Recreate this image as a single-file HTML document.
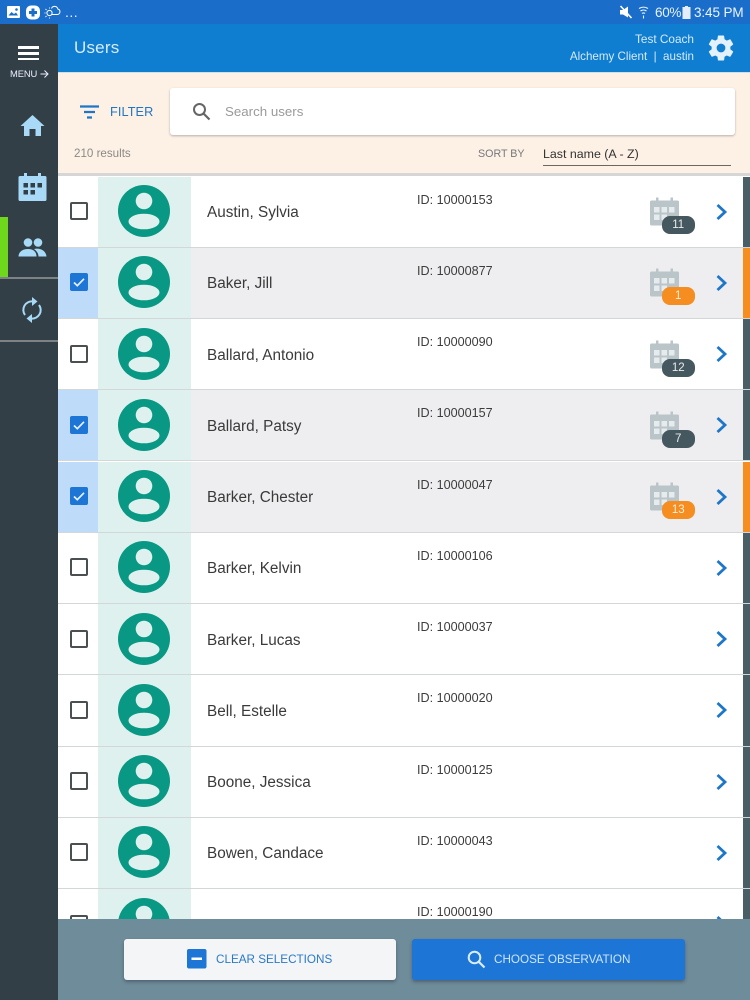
<!DOCTYPE html>
<html><head><meta charset="utf-8"><style>
*{box-sizing:border-box}
html,body{margin:0;padding:0;width:750px;height:1000px;overflow:hidden;background:#fff;font-family:"Liberation Sans",sans-serif}
.a{position:absolute}
#p{position:relative;width:750px;height:1000px;overflow:hidden}
.row{position:absolute;left:58px;width:692px;height:71.3px;background:#fff;border-bottom:1.5px solid #d4d7d8}
.row.s{background:#eeedef}
.row .chk{position:absolute;left:0;top:0;width:40px;height:100%}
.row.s .chk{background:#bedcfa}
.row .band{position:absolute;left:40px;top:0;width:93px;height:100%;background:#dff1ef}
.row .box{position:absolute;left:12px;top:25.500px;width:18px;height:18px;border:2px solid #4a4f52;border-radius:2px;background:#fff}
.row.s .box{border:0;background:#1d76d6}
.row .av{position:absolute;left:60px;top:8.500px}
.row .n{position:absolute;left:149px;top:27.500px;font-size:15.3px;line-height:18px;color:#3a3a3a;white-space:nowrap}
.row .id{position:absolute;left:359px;top:16px;font-size:12.600px;line-height:15px;color:#3c3c3c;white-space:nowrap}
.row .cal{position:absolute;left:591.500px;top:20.500px}
.row .b{position:absolute;left:604px;top:39.500px;width:32.500px;height:18px;border-radius:8px;background:#46585f;color:#e8eced;font-size:11.5px;line-height:18px;text-align:center}
.row .b.o{background:#f68d20;color:#fdeedd}
.row .ch{position:absolute;left:658px;top:26px}
.row .r{position:absolute;left:685px;top:0;width:7px;height:100%;background:#4a5e65}
.row .r.o{background:#f68d20}
</style></head><body><div id="p">
<svg width="0" height="0" style="position:absolute"><defs>
<symbol id="av" viewBox="0 0 52 52"><circle cx="26" cy="26" r="26" fill="#099884"/><circle cx="26" cy="16" r="8.300" fill="#dff1ef"/><ellipse cx="26" cy="36.500" rx="15.500" ry="7.800" fill="#dff1ef"/></symbol>
<symbol id="cal" viewBox="0 0 29 29"><path fill="#bac5ca" d="M1.500 3.500H6V.5h2.500v3h12v-3H23v3h4.500A1.500 1.500 0 0 1 29 5v22a1.500 1.500 0 0 1-1.500 1.500h-26A1.500 1.500 0 0 1 0 27V5a1.500 1.500 0 0 1 1.500-1.500z"/><path fill="#e6ecee" d="M4 10h5.500v5.500H4zM11.500 10H17v5.500h-5.500zM19 10h5.500v5.500H19zM4 17.500h5.500V23H4zM11.500 17.500H17V23h-5.500z"/></symbol>
<symbol id="ch" viewBox="0 0 12 18"><path d="M1.500 2l7.500 7-7.500 7" fill="none" stroke="#1d76c8" stroke-width="2.800"/></symbol>
<symbol id="ck" viewBox="0 0 18 18"><path d="M4 9.500l3.300 3.200L14 5.800" fill="none" stroke="#e8f2fc" stroke-width="1.700"/></symbol>
</defs></svg>

<div class="row" style="top:176.500px"><div class="chk"><div class="box"></div></div><div class="band"></div><svg class="av" width="52" height="52"><use href="#av"/></svg><div class="n">Austin, Sylvia</div><div class="id">ID: 10000153</div><svg class="cal" width="29" height="29"><use href="#cal"/></svg><div class="b">11</div><svg class="ch" width="12" height="18"><use href="#ch"/></svg><div class="r"></div></div>
<div class="row s" style="top:247.800px"><div class="chk"><div class="box"><svg width="18" height="18" style="display:block"><use href="#ck"/></svg></div></div><div class="band"></div><svg class="av" width="52" height="52"><use href="#av"/></svg><div class="n">Baker, Jill</div><div class="id">ID: 10000877</div><svg class="cal" width="29" height="29"><use href="#cal"/></svg><div class="b o">1</div><svg class="ch" width="12" height="18"><use href="#ch"/></svg><div class="r o"></div></div>
<div class="row" style="top:319.100px"><div class="chk"><div class="box"></div></div><div class="band"></div><svg class="av" width="52" height="52"><use href="#av"/></svg><div class="n">Ballard, Antonio</div><div class="id">ID: 10000090</div><svg class="cal" width="29" height="29"><use href="#cal"/></svg><div class="b">12</div><svg class="ch" width="12" height="18"><use href="#ch"/></svg><div class="r"></div></div>
<div class="row s" style="top:390.200px"><div class="chk"><div class="box"><svg width="18" height="18" style="display:block"><use href="#ck"/></svg></div></div><div class="band"></div><svg class="av" width="52" height="52"><use href="#av"/></svg><div class="n">Ballard, Patsy</div><div class="id">ID: 10000157</div><svg class="cal" width="29" height="29"><use href="#cal"/></svg><div class="b">7</div><svg class="ch" width="12" height="18"><use href="#ch"/></svg><div class="r"></div></div>
<div class="row s" style="top:461.500px"><div class="chk"><div class="box"><svg width="18" height="18" style="display:block"><use href="#ck"/></svg></div></div><div class="band"></div><svg class="av" width="52" height="52"><use href="#av"/></svg><div class="n">Barker, Chester</div><div class="id">ID: 10000047</div><svg class="cal" width="29" height="29"><use href="#cal"/></svg><div class="b o">13</div><svg class="ch" width="12" height="18"><use href="#ch"/></svg><div class="r o"></div></div>
<div class="row" style="top:532.800px"><div class="chk"><div class="box"></div></div><div class="band"></div><svg class="av" width="52" height="52"><use href="#av"/></svg><div class="n">Barker, Kelvin</div><div class="id">ID: 10000106</div><svg class="ch" width="12" height="18"><use href="#ch"/></svg><div class="r"></div></div>
<div class="row" style="top:604px"><div class="chk"><div class="box"></div></div><div class="band"></div><svg class="av" width="52" height="52"><use href="#av"/></svg><div class="n">Barker, Lucas</div><div class="id">ID: 10000037</div><svg class="ch" width="12" height="18"><use href="#ch"/></svg><div class="r"></div></div>
<div class="row" style="top:675.300px"><div class="chk"><div class="box"></div></div><div class="band"></div><svg class="av" width="52" height="52"><use href="#av"/></svg><div class="n">Bell, Estelle</div><div class="id">ID: 10000020</div><svg class="ch" width="12" height="18"><use href="#ch"/></svg><div class="r"></div></div>
<div class="row" style="top:746.600px"><div class="chk"><div class="box"></div></div><div class="band"></div><svg class="av" width="52" height="52"><use href="#av"/></svg><div class="n">Boone, Jessica</div><div class="id">ID: 10000125</div><svg class="ch" width="12" height="18"><use href="#ch"/></svg><div class="r"></div></div>
<div class="row" style="top:817.900px"><div class="chk"><div class="box"></div></div><div class="band"></div><svg class="av" width="52" height="52"><use href="#av"/></svg><div class="n">Bowen, Candace</div><div class="id">ID: 10000043</div><svg class="ch" width="12" height="18"><use href="#ch"/></svg><div class="r"></div></div>
<div class="row" style="top:889.200px"><div class="chk"><div class="box"></div></div><div class="band"></div><svg class="av" width="52" height="52"><use href="#av"/></svg><div class="id">ID: 10000190</div><svg class="ch" width="12" height="18"><use href="#ch"/></svg><div class="r"></div></div>

<!-- status bar -->
<div class="a" style="left:0;top:0;width:750px;height:24px;background:#1a6ec9"></div>
<svg class="a" style="left:0;top:5px" width="63" height="15"><g transform="translate(7 0)"><rect x="0" y="1" width="13" height="12" rx="1" fill="#fff"/><circle cx="9.500" cy="4.500" r="1.300" fill="#1a6ec9"/><path d="M1.500 10.500l3-3.500 2.500 2 2-1.500 2 3z" fill="#1a6ec9"/></g><rect x="26" y="0.500" width="14" height="14" rx="5" fill="#fff"/><path d="M31.500 3.500h3v2.500H37v3h-2.500v2.500h-3V9H29V6h2.500z" fill="#1a6ec9"/><circle cx="49.500" cy="8" r="2.600" fill="none" stroke="#fff" stroke-width="1"/><path d="M45.500 8h-1M49.500 12.500v1M49.500 3.500v-1M46.500 5l-1-1M46.500 11l-1 1" stroke="#fff" stroke-width=".9"/><path d="M52 9.500h5.500a2.800 2.800 0 0 0 .3-5.500 3.300 3.300 0 0 0-6.300-.5" fill="none" stroke="#fff" stroke-width="1"/></svg>
<div class="a" style="left:65px;top:3px;font-size:14px;line-height:18px;color:#e8f0fa;letter-spacing:.5px">...</div>
<svg class="a" style="left:618px;top:5px" width="32" height="15"><path d="M2 5h3l5-3.500v11L5 9.500H2z" fill="#fff"/><path d="M2.500 1l11 12" stroke="#fff" stroke-width="1.600"/><path d="M21 3.500a8 8 0 0 1 9 0M22.500 6a5 5 0 0 1 6 0M24 8.500a2.500 2.500 0 0 1 3 0M25.500 10.500v3" stroke="#e8f0fa" stroke-width="1.100" fill="none"/></svg>
<div class="a" style="left:655px;top:4px;font-size:13.500px;line-height:17px;color:#e8f1fb;white-space:nowrap;letter-spacing:-.3px">60%</div>
<svg class="a" style="left:682px;top:6px" width="9" height="13"><path d="M3 0h3v1h2.500v12H.5V1H3z" fill="#e4eefa"/></svg>
<div class="a" style="left:694px;top:4px;font-size:13.500px;line-height:17px;color:#eef4fc;white-space:nowrap;letter-spacing:-.1px">3:45 PM</div>

<!-- header -->
<div class="a" style="left:58px;top:24px;width:692px;height:48px;background:#0f7dd0"></div>
<div class="a" style="left:74px;top:38px;font-size:17px;line-height:20px;color:#d8ecfa;letter-spacing:.2px">Users</div>
<div class="a" style="right:56px;top:31px;font-size:11.800px;line-height:16px;color:#d5ebfa;white-space:nowrap">Test Coach</div>
<div class="a" style="right:56px;top:49px;font-size:11.600px;line-height:16px;color:#d5ebfa;white-space:nowrap">Alchemy Client &nbsp;|&nbsp; austin</div>
<svg class="a" style="left:706px;top:33px" width="30" height="30" viewBox="0 0 24 24"><path fill="#e3f1fb" fill-rule="evenodd" d="M19.430 12.980c.04-.32.070-.64.070-.98s-.03-.66-.07-.98l2.110-1.650c.19-.15.240-.42.120-.64l-2-3.460c-.12-.22-.39-.3-.61-.22l-2.490 1c-.52-.4-1.080-.73-1.690-.98l-.38-2.650A.49.49 0 0 0 14 2h-4c-.25 0-.46.18-.49.42l-.38 2.650c-.61.25-1.170.59-1.690.98l-2.490-1c-.23-.09-.49 0-.61.22l-2 3.460c-.13.22-.07.49.12.64l2.110 1.650c-.04.32-.07.65-.07.98s.03.660.07.980l-2.110 1.650c-.19.150-.24.420-.12.640l2 3.460c.12.220.39.3.61.220l2.490-1c.52.4 1.080.73 1.690.98l.38 2.650c.03.24.24.42.49.42h4c.25 0 .46-.18.49-.42l.38-2.650c.61-.25 1.170-.59 1.690-.98l2.490 1c.23.09.49 0 .61-.22l2-3.460c.12-.22.07-.49-.12-.64zM12 15.500a3.500 3.500 0 1 1 0-7 3.500 3.500 0 0 1 0 7z"/></svg>

<!-- filter bar -->
<div class="a" style="left:58px;top:72px;width:692px;height:104px;background:#fdf1e6;border-bottom:3px solid #d6d6d6;border-top:1px solid #cfe0ea"></div>
<svg class="a" style="left:80px;top:104.500px" width="20" height="14"><path d="M0 1.500h19M4 7h11M7 12.500h5" stroke="#1d76c8" stroke-width="2.200"/></svg>
<div class="a" style="left:110px;top:104px;font-size:12.700px;line-height:16px;color:#1f76c6;letter-spacing:.1px">FILTER</div>
<div class="a" style="left:170px;top:88px;width:565px;height:47px;background:#fff;border-radius:3px;box-shadow:0 1px 2px rgba(0,0,0,.28)"></div>
<svg class="a" style="left:192px;top:102px" width="20" height="20"><circle cx="7.500" cy="7.500" r="5.500" fill="none" stroke="#666" stroke-width="2"/><path d="M11.500 11.500l6 6" stroke="#666" stroke-width="2.200"/></svg>
<div class="a" style="left:225px;top:103px;font-size:13.300px;line-height:17px;color:#9a9a9a">Search users</div>
<div class="a" style="left:74px;top:147px;font-size:11.600px;line-height:14px;color:#8a8a86">210 results</div>
<div class="a" style="left:478px;top:147px;font-size:10.700px;line-height:14px;color:#77777a">SORT BY</div>
<div class="a" style="left:543px;top:146px;font-size:12.400px;line-height:16px;color:#333">Last name (A - Z)</div>
<div class="a" style="left:543px;top:165px;width:188px;height:1px;background:#6b6763"></div>

<!-- sidebar -->
<div class="a" style="left:0;top:24px;width:58px;height:976px;background:#323f47"></div>
<div class="a" style="left:18px;top:46px;width:21px;height:2.500px;background:#fff"></div>
<div class="a" style="left:18px;top:52px;width:21px;height:2.500px;background:#fff"></div>
<div class="a" style="left:18px;top:57.500px;width:21px;height:2.500px;background:#fff"></div>
<div class="a" style="left:10px;top:67px;font-size:9.400px;line-height:14px;color:#eef;letter-spacing:-.1px">MENU</div>
<svg class="a" style="left:40px;top:69px" width="9" height="10"><path d="M0.500 5h7M4.500 1.500L8 5 4.500 8.500" fill="none" stroke="#eef" stroke-width="1"/></svg>
<svg class="a" style="left:20px;top:114.500px" width="25" height="22"><path d="M12.500 0L24.500 11h-3.500v10h-5.500v-7h-6v7H4V11H.5z" fill="#a8daf7"/></svg>
<svg class="a" style="left:18px;top:173px" width="29" height="28" viewBox="0 0 29 28"><path fill="#a8daf7" d="M2 3h4V0h3v3h11V0h3v3h4a1.500 1.500 0 0 1 1.500 1.500v22A1.500 1.500 0 0 1 27 28H2a1.500 1.500 0 0 1-1.500-1.500v-22A1.500 1.500 0 0 1 2 3z"/><path fill="#323f47" d="M5.500 10h4.500v4.500H5.500zM12.500 10H17v4.500h-4.500zM19.500 10H24v4.500h-4.500zM5.500 17H10v4.500H5.500zM12.500 17H17v4.500h-4.500z"/></svg>
<div class="a" style="left:0;top:217px;width:8px;height:60px;background:#6fd71c"></div>
<svg class="a" style="left:18px;top:238px" width="29" height="19"><circle cx="10" cy="4.500" r="4.300" fill="#a8daf7"/><circle cx="20" cy="4.500" r="4.300" fill="#a8daf7"/><path d="M0.500 18.500c0-4.500 4-7.500 9.500-7.500s8.500 3 8.500 7.500z" fill="#a8daf7"/><path d="M16 11c6.500-1.500 12 2 12.500 7.500H20.500c0-3-1.800-5.500-4.500-7.500z" fill="#a8daf7"/></svg>
<div class="a" style="left:0;top:277px;width:58px;height:2px;background:#7d8285"></div>
<svg class="a" style="left:22px;top:297px" width="20" height="26" viewBox="0 0 20 26"><g fill="none" stroke="#a8daf7" stroke-width="2"><path d="M3 18A8.500 8.500 0 0 1 11 4.500"/><path d="M17 8A8.500 8.500 0 0 1 9 21.500"/></g><path d="M10 0l5.500 4.500L10 9z" fill="#a8daf7"/><path d="M10 17l-5.500 4.500L10 26z" fill="#a8daf7"/></svg>
<div class="a" style="left:0;top:340px;width:58px;height:2px;background:#7d8285"></div>

<!-- bottom -->
<div class="a" style="left:58px;top:919px;width:692px;height:81px;background:#6f8c9b"></div>
<div class="a" style="left:124px;top:939px;width:272px;height:41px;background:#f4f5f6;border-radius:3px;box-shadow:0 2px 3px rgba(40,50,60,.45)"></div>
<svg class="a" style="left:187px;top:949px" width="20" height="20"><rect width="19.500" height="19.500" rx="2" fill="#1d76d6"/><rect x="4.500" y="8.500" width="10.500" height="2.500" fill="#fff"/></svg>
<div class="a" style="left:216px;top:951.500px;font-size:11.700px;line-height:16px;color:#2a79c8;white-space:nowrap">CLEAR SELECTIONS</div>
<div class="a" style="left:412px;top:939px;width:273px;height:41px;background:#1d76d6;border-radius:3px;box-shadow:0 2px 3px rgba(40,50,60,.45)"></div>
<svg class="a" style="left:467px;top:950px" width="19" height="19"><circle cx="7.500" cy="7.500" r="5.800" fill="none" stroke="#dcecfb" stroke-width="2"/><path d="M11.500 11.500l6 6" stroke="#dcecfb" stroke-width="2.200"/></svg>
<div class="a" style="left:494px;top:951.500px;font-size:11.700px;line-height:16px;color:#cfe5fa;white-space:nowrap">CHOOSE OBSERVATION</div>
</div></body></html>
